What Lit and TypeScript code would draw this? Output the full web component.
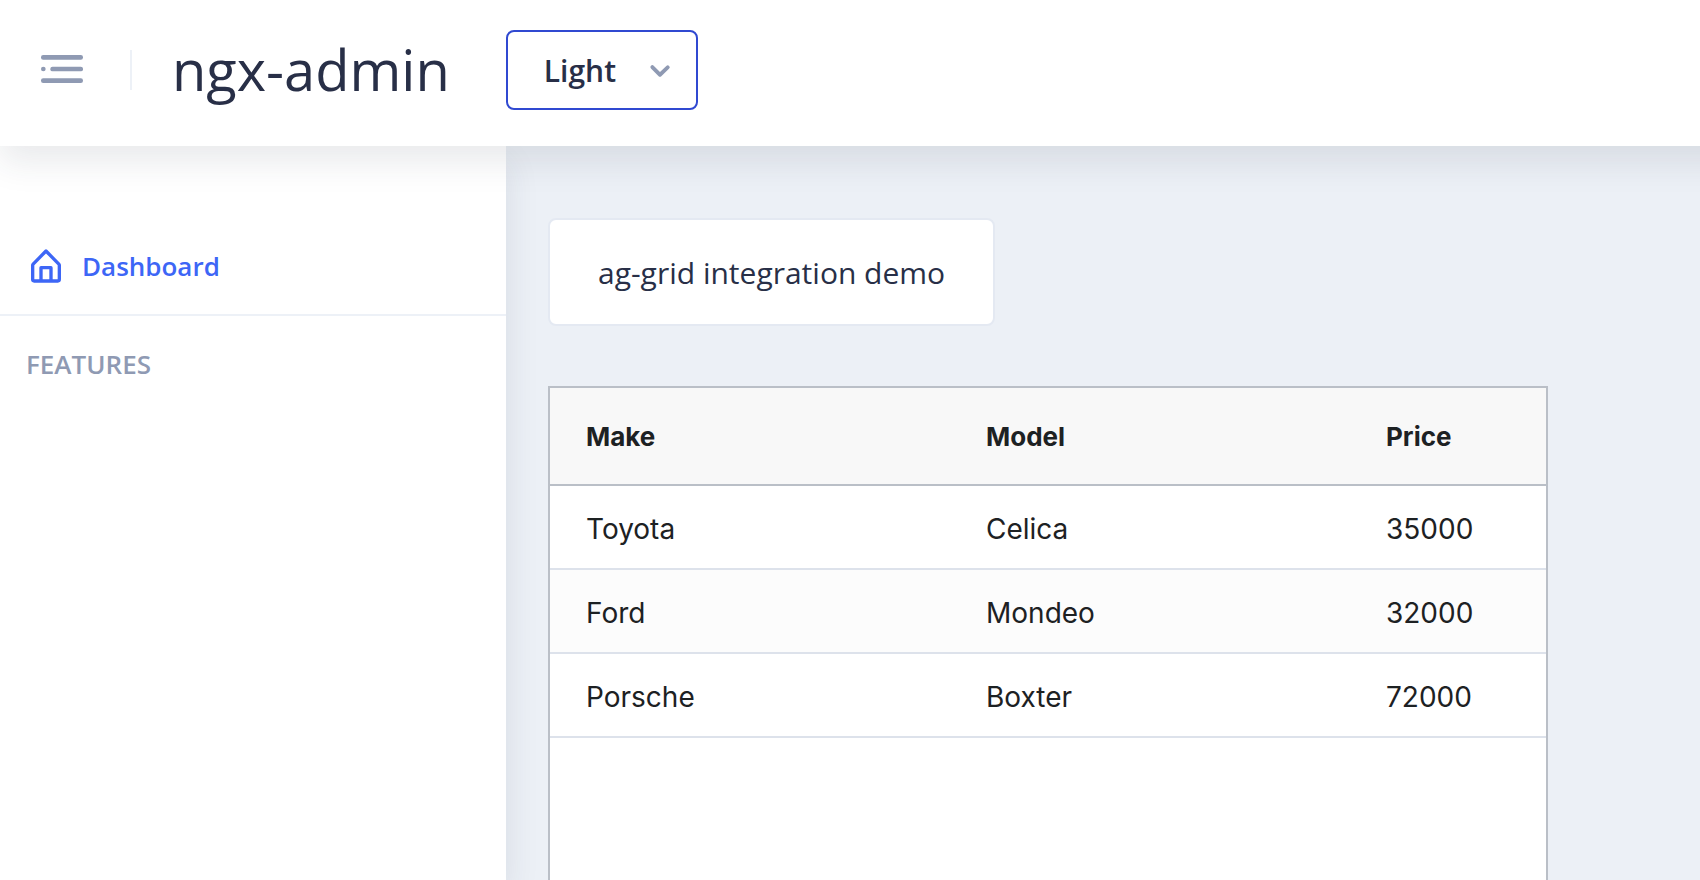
import { LitElement, html, css } from "lit";
import { customElement, property, state } from "lit/decorators.js";

interface Car {
  make: string;
  model: string;
  price: number;
}

@customElement("app-header")
class AppHeader extends LitElement {
  @state() private theme = "Light";

  static styles = css`
    :host {
      display: block;
      position: relative;
      z-index: 2;
      margin-right: -48px;
      background: #ffffff;
      box-shadow: 0 16px 32px 0 rgba(44, 51, 73, 0.1);
    }
    .bar {
      display: flex;
      align-items: center;
      min-height: 140px;
      padding: 0 82px 6px 34px;
    }
    .toggle {
      display: flex;
      padding: 0 0 2px;
      border: 0;
      background: none;
      color: #8f9ab3;
      cursor: pointer;
    }
    .toggle svg {
      width: 56px;
      height: 56px;
    }
    .divider {
      width: 2px;
      height: 40px;
      margin-left: 40px;
      background: #edf1f7;
    }
    .logo {
      margin: 0 56px 0 40px;
      padding-bottom: 2px;
      color: #282f47;
      font-size: 56px;
      line-height: 76px;
      text-decoration: none;
      white-space: nowrap;
    }
    .picker {
      display: grid;
      align-items: center;
      width: 192px;
    }
    .picker select,
    .picker svg {
      grid-area: 1 / 1;
    }
    .picker select {
      width: 100%;
      height: 80px;
      padding: 2px 64px 0 36px;
      border: 2px solid #3049d1;
      border-radius: 8px;
      background: #ffffff;
      color: #282f47;
      font: 600 30px/40px "Open Sans", sans-serif;
      appearance: none;
      outline: none;
    }
    .picker svg {
      justify-self: end;
      width: 46px;
      height: 46px;
      margin-right: 15px;
      color: #8f9ab3;
      pointer-events: none;
    }
  `;

  private onTheme(e: Event) {
    this.theme = (e.target as HTMLSelectElement).value;
  }

  render() {
    return html`
      <header class="bar">
        <button class="toggle" aria-label="Toggle sidebar">
          <svg viewBox="0 0 24 24" fill="currentColor">
            <circle cx="4" cy="12" r="1" />
            <rect x="7" y="11" width="14" height="2" rx=".94" />
            <rect x="3" y="16" width="18" height="2" rx=".94" />
            <rect x="3" y="6" width="18" height="2" rx=".94" />
          </svg>
        </button>
        <span class="divider"></span>
        <a class="logo" href="#">ngx-admin</a>
        <div class="picker">
          <select aria-label="Theme" .value=${this.theme} @change=${this.onTheme}>
            <option>Light</option>
            <option>Dark</option>
            <option>Cosmic</option>
            <option>Corporate</option>
          </select>
          <svg viewBox="0 0 24 24" fill="currentColor">
            <path d="M12 15.5a1 1 0 0 1-.71-.29l-4-4a1 1 0 1 1 1.42-1.42L12 13.1l3.3-3.18a1 1 0 1 1 1.38 1.44l-4 3.86a1 1 0 0 1-.68.28z" />
          </svg>
        </div>
      </header>
    `;
  }
}

@customElement("app-sidebar")
class AppSidebar extends LitElement {
  static styles = css`
    :host {
      display: block;
      position: relative;
      z-index: 1;
      background: #ffffff;
      box-shadow: 0 16px 32px 0 rgba(44, 51, 73, 0.1);
    }
    .menu {
      margin: 0;
      padding: 72px 0 0;
      list-style: none;
      font-size: 26px;
      font-weight: 600;
      line-height: 48px;
    }
    .item {
      padding: 24px 26px;
      border-bottom: 2px solid #edf1f7;
    }
    .link {
      display: flex;
      align-items: center;
      gap: 16px;
      color: #3d66f6;
      text-decoration: none;
    }
    .link svg {
      width: 40px;
      height: 40px;
    }
    .group {
      padding: 24px 26px;
      color: #8f9ab3;
    }
  `;

  render() {
    return html`
      <nav>
        <ul class="menu">
          <li class="item">
            <a class="link" href="#">
              <svg viewBox="0 0 24 24" fill="currentColor">
                <path d="M20.42 10.18L12.71 2.3a1 1 0 0 0-1.42 0l-7.71 7.89A2 2 0 0 0 3 11.62V20a2 2 0 0 0 1.89 2h14.22A2 2 0 0 0 21 20v-8.38a2.07 2.07 0 0 0-.58-1.44zM10 20v-6h4v6zm9 0h-3v-7a1 1 0 0 0-1-1H9a1 1 0 0 0-1 1v7H5v-8.42l7-7.15 7 7.19z" />
              </svg>
              <span>Dashboard</span>
            </a>
          </li>
          <li class="group">FEATURES</li>
        </ul>
      </nav>
    `;
  }
}

@customElement("car-grid")
class CarGrid extends LitElement {
  @property({ attribute: false }) rows: Car[] = [];

  static styles = css`
    :host {
      display: block;
      border: 2px solid #babfc7;
      border-bottom: 0;
      background: #ffffff;
      color: #1d2123;
      font-family: Inter, sans-serif;
      overflow: hidden;
    }
    table {
      width: 100%;
      table-layout: fixed;
      border-collapse: separate;
      border-spacing: 0;
    }
    .wide {
      width: 400px;
    }
    th,
    td {
      box-sizing: border-box;
      padding: 0 0 0 36px;
      text-align: left;
    }
    th {
      height: 98px;
      border-bottom: 2px solid #babfc7;
      background: #f8f8f8;
      font-size: 26px;
      font-weight: 700;
    }
    td {
      height: 84px;
      padding-top: 4px;
      border-bottom: 2px solid #dde2eb;
      font-size: 28px;
    }
    tbody tr:nth-child(even) td {
      background: #fcfcfc;
    }
  `;

  render() {
    return html`
      <table>
        <colgroup>
          <col class="wide" />
          <col class="wide" />
          <col />
        </colgroup>
        <thead>
          <tr>
            <th scope="col">Make</th>
            <th scope="col">Model</th>
            <th scope="col">Price</th>
          </tr>
        </thead>
        <tbody>
          ${this.rows.map(
            (r) => html`<tr>
              <td>${r.make}</td>
              <td>${r.model}</td>
              <td>${r.price}</td>
            </tr>`
          )}
        </tbody>
      </table>
    `;
  }
}

@customElement("app-root")
class AppRoot extends LitElement {
  private cars: Car[] = [
    { make: "Toyota", model: "Celica", price: 35000 },
    { make: "Ford", model: "Mondeo", price: 32000 },
    { make: "Porsche", model: "Boxter", price: 72000 },
  ];

  static styles = css`
    :host {
      display: flex;
      flex-direction: column;
      min-height: 100vh;
      overflow: clip;
      background: #ecf0f6;
      color: #282f47;
      font-family: "Open Sans", sans-serif;
    }
    .body {
      display: flex;
      flex: 1;
    }
    .side {
      flex: 0 0 506px;
    }
    .content {
      display: flex;
      flex: 1;
      flex-direction: column;
      align-items: flex-start;
      gap: 60px;
      min-width: 0;
      padding: 72px 42px 0;
    }
    .card {
      padding: 33px 48px 31px;
      border: 2px solid #e4e9f2;
      border-radius: 8px;
      background: #ffffff;
      font-size: 30px;
      line-height: 40px;
    }
    .grid {
      flex: 1;
      box-sizing: border-box;
      width: 1000px;
      max-width: 100%;
    }
  `;

  render() {
    return html`
      <app-header></app-header>
      <div class="body">
        <app-sidebar class="side"></app-sidebar>
        <main class="content">
          <div class="card">ag-grid integration demo</div>
          <car-grid class="grid" .rows=${this.cars}></car-grid>
        </main>
      </div>
    `;
  }
}
